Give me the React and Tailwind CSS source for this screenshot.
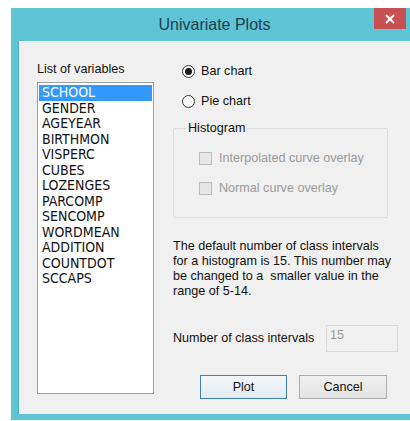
import React from "react";

const variables = [
  "SCHOOL",
  "GENDER",
  "AGEYEAR",
  "BIRTHMON",
  "VISPERC",
  "CUBES",
  "LOZENGES",
  "PARCOMP",
  "SENCOMP",
  "WORDMEAN",
  "ADDITION",
  "COUNTDOT",
  "SCCAPS",
];

const ui = { fontFamily: '"Liberation Sans", Arial, sans-serif' };
const listFont = {
  fontFamily: '"DejaVu Sans Condensed", "Liberation Sans Narrow", "Liberation Sans", sans-serif',
};

function Radio({ checked, label }) {
  return (
    <div className="flex items-center h-[15px] pl-[9px]">
      <span className="w-[13px] h-[13px] rounded-full border border-[#333] bg-white flex items-center justify-center">
        {checked && <span className="w-[7px] h-[7px] rounded-full bg-[#1a1a1a]" />}
      </span>
      <span className="ml-[6px] text-[12.6px] leading-[15px] text-[#111]">{label}</span>
    </div>
  );
}

function DisabledCheck({ label }) {
  return (
    <div className="flex items-center h-[13px]">
      <span className="w-[13px] h-[13px] border border-[#bcbcbc] bg-[#e6e6e6]" />
      <span className="ml-[7px] text-[12.6px] leading-[15px] text-[#9a9a9a]">{label}</span>
    </div>
  );
}

export default function App() {
  return (
    <div className="w-[410px] h-[421px] bg-white pt-[8px] pl-[11px] overflow-hidden" style={ui}>
      <div className="w-[399px] h-[412px] bg-[#5ec4d6] flex flex-col">
        {/* title bar */}
        <div className="relative h-[33px] flex items-center justify-center pl-[8px]">
          <span className="text-[16px] text-[#22404f]">Univariate Plots</span>
          <div className="absolute top-0 right-[4px] w-[32px] h-[21px] bg-[#c75050] flex items-center justify-center">
            <svg width="10" height="10" viewBox="0 0 10 10">
              <path d="M1 1 L9 9 M9 1 L1 9" stroke="white" strokeWidth="2" />
            </svg>
          </div>
        </div>

        {/* client area */}
        <div className="ml-[7px] w-[392px] h-[373px] bg-[#f0f0f0] flex border-l border-[#4aa9ba]">
          {/* variable list */}
          <div className="ml-[18px] w-[117px] shrink-0 pt-[21px]">
            <div className="text-[12.6px] leading-[15px] text-[#111]">List of variables</div>
            <div className="mt-[5px] h-[312px] bg-white border border-[#a0a0a0] pt-[2px] px-[1px]" style={listFont}>
              {variables.map((v, i) => (
                <div
                  key={v}
                  className={
                    "h-[15.5px] leading-[15.5px] pl-[3px] text-[14px] " +
                    (i === 0 ? "bg-[#3399ff] text-white" : "text-[#111]")
                  }
                >
                  {v}
                </div>
              ))}
            </div>
          </div>

          {/* options */}
          <div className="ml-[19px] w-[215px] shrink-0 pt-[23px] flex flex-col">
            <Radio checked label="Bar chart" />
            <div className="mt-[15px]">
              <Radio label="Pie chart" />
            </div>

            <div className="relative mt-[19px] h-[90px] border border-[#dcdcdc] rounded-[2px] pl-[25px] pt-[23px]">
              <span className="absolute -top-[8px] left-[12px] px-[2px] bg-[#f0f0f0] text-[12.6px] leading-[15px] text-[#111]">
                Histogram
              </span>
              <DisabledCheck label="Interpolated curve overlay" />
              <div className="mt-[17px]">
                <DisabledCheck label="Normal curve overlay" />
              </div>
            </div>

            <p className="mt-[21px] text-[12.6px] leading-[15px] text-[#111] whitespace-pre">
              {"The default number of class intervals\nfor a histogram is 15. This number may\nbe changed to a  smaller value in the\nrange of 5-14."}
            </p>

            <div className="mt-[26px] flex items-center w-[225px]">
              <span className="text-[12.6px] leading-[15px] text-[#111] whitespace-nowrap">Number of class intervals</span>
              <div className="ml-auto shrink-0 w-[72px] h-[27px] border border-[#d9d9d9] bg-[#f0f0f0] pl-[3px] pt-[2px] text-[12.6px] leading-[15px] text-[#9a9a9a]">
                15
              </div>
            </div>

            <div className="mt-[23px] flex pl-[27px] gap-[12px]">
              <div className="w-[87px] h-[24px] border border-[#3c7fb1] bg-gradient-to-b from-[#f2f6f9] to-[#e3ebf1] flex items-center justify-center text-[12.6px] text-[#111]">
                Plot
              </div>
              <div className="w-[88px] h-[24px] border border-[#adadad] bg-gradient-to-b from-[#f0f0f0] to-[#e3e3e3] flex items-center justify-center text-[12.6px] text-[#111]">
                Cancel
              </div>
            </div>
          </div>
        </div>
      </div>
    </div>
  );
}
